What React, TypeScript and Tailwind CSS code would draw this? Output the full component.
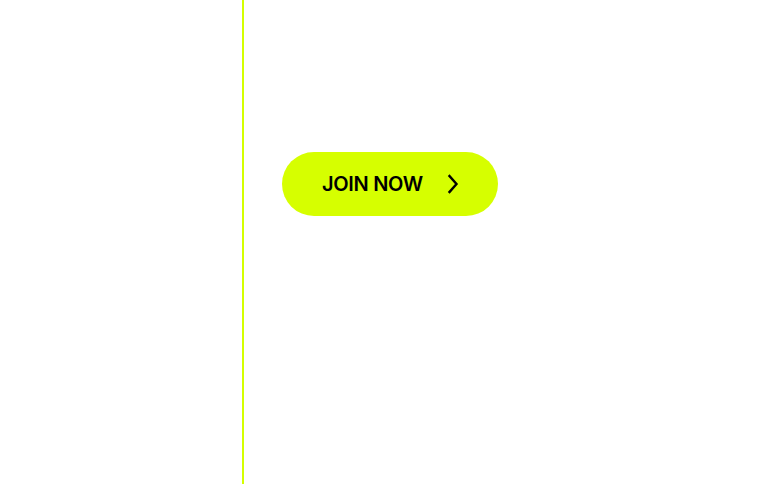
import React from "react";

export default function App() {
  return (
    <div className="flex h-[484px] w-[762px] bg-white" style={{ fontFamily: "Inter, 'Liberation Sans', sans-serif" }}>
      <div className="w-[242px] shrink-0" />
      <div className="w-[2px] shrink-0 bg-[#d4ff00]" />
      <div className="flex-1 pl-[38px] pt-[152px]">
        <button className="flex h-[64px] w-[216px] items-center rounded-full bg-[#d6ff00] pl-[40px] text-[20px] leading-none font-semibold tracking-[-0.3px] text-black">
          <span>JOIN NOW</span>
          <svg className="ml-[24px]" width="12" height="20" viewBox="0 0 12 20" fill="none">
            <path d="M2.5 2 L9.5 10 L2.5 18" stroke="black" strokeWidth="2.4" strokeLinecap="square" />
          </svg>
        </button>
      </div>
    </div>
  );
}
